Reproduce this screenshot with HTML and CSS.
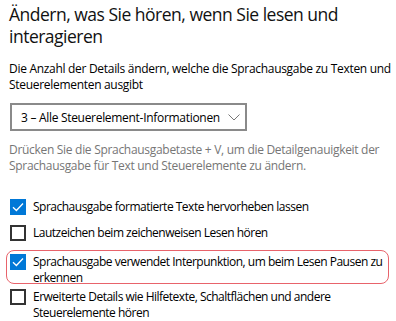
FILE: index.html
```html
<!DOCTYPE html>
<html lang="de">
<head>
    <meta charset="UTF-8">
    <title>Sprachausgabe</title>
    <link rel="stylesheet" href="styles.css">
</head>
<body>
<div class="page">
    <h1>Ändern, was Sie hören, wenn Sie lesen und interagieren</h1>

    <p class="desc">Die Anzahl der Details ändern, welche die Sprachausgabe zu Texten und Steuerelementen ausgibt</p>

    <div class="select">
        <span>3 – Alle Steuerelement-Informationen</span>
        <svg class="chev" width="12" height="7" viewBox="0 0 12 7"><path d="M0.5 0.5 L6 6 L11.5 0.5" fill="none" stroke="#777" stroke-width="1"/></svg>
    </div>

    <p class="hint">Drücken Sie die Sprachausgabetaste + V, um die Detailgenauigkeit der Sprachausgabe für Text und Steuerelemente zu ändern.</p>

    <div class="options">
        <label class="check">
            <span class="box on"><svg width="16" height="16" viewBox="0 0 16 16"><path d="M3 8.2 L6.4 11.5 L13 4.5" fill="none" stroke="#fff" stroke-width="1.3"/></svg></span>
            <span class="txt">Sprachausgabe formatierte Texte hervorheben lassen</span>
        </label>
        <label class="check second">
            <span class="box"></span>
            <span class="txt">Lautzeichen beim zeichenweisen Lesen hören</span>
        </label>
        <label class="check focus">
            <span class="box on"><svg width="16" height="16" viewBox="0 0 16 16"><path d="M3 8.2 L6.4 11.5 L13 4.5" fill="none" stroke="#fff" stroke-width="1.3"/></svg></span>
            <span class="txt">Sprachausgabe verwendet Interpunktion, um beim Lesen Pausen zu erkennen</span>
        </label>
        <label class="check last">
            <span class="box"></span>
            <span class="txt">Erweiterte Details wie Hilfetexte, Schaltflächen und andere Steuerelemente hören</span>
        </label>
    </div>
</div>
</body>
</html>
```

FILE: styles.css
```css
body { margin: 0; background: #fff; font-family: "Open Sans", "Noto Sans", Arial, sans-serif; color: #000; }
.page { padding: 3px 0 0 9px; }
h1 { font-family: "Open Sans", sans-serif; font-size: 17.5px; font-weight: 400; line-height: 22px; margin: 0; letter-spacing: -0.5px; color: #111; }
.desc { font-size: 12px; line-height: 16px; margin: 14px 0 0; letter-spacing: -0.3px; }
.select { margin: 10px 0 0 1px; width: 237px; height: 28px; box-sizing: border-box; border: 2px solid #8a8a8a; display: flex; align-items: center; justify-content: space-between; padding: 0 5px 0 9px; font-size: 12px; letter-spacing: -0.3px; }
.hint { font-size: 12px; line-height: 16px; color: #767676; margin: 11px 0 0; letter-spacing: -0.3px; }
.options { margin-top: 25px; display: flex; flex-direction: column; }
.check { display: flex; align-items: flex-start; gap: 7px; font-size: 12px; line-height: 16px; letter-spacing: -0.5px; position: relative; }
.second { margin-top: 10px; }
.focus { margin-top: 13px; }
.last { margin-top: 3px; }
.box { flex: none; width: 16px; height: 16px; box-sizing: border-box; border: 2px solid #333; background: #fff; margin-left: 1px; }
.box.on { background: #0078d7; border: none; }
.box svg { display: block; }
.focus::before { content: ""; position: absolute; top: -4px; bottom: 2px; left: -3px; right: 7px; border: 1px solid #e8636b; border-radius: 8px; }
```
